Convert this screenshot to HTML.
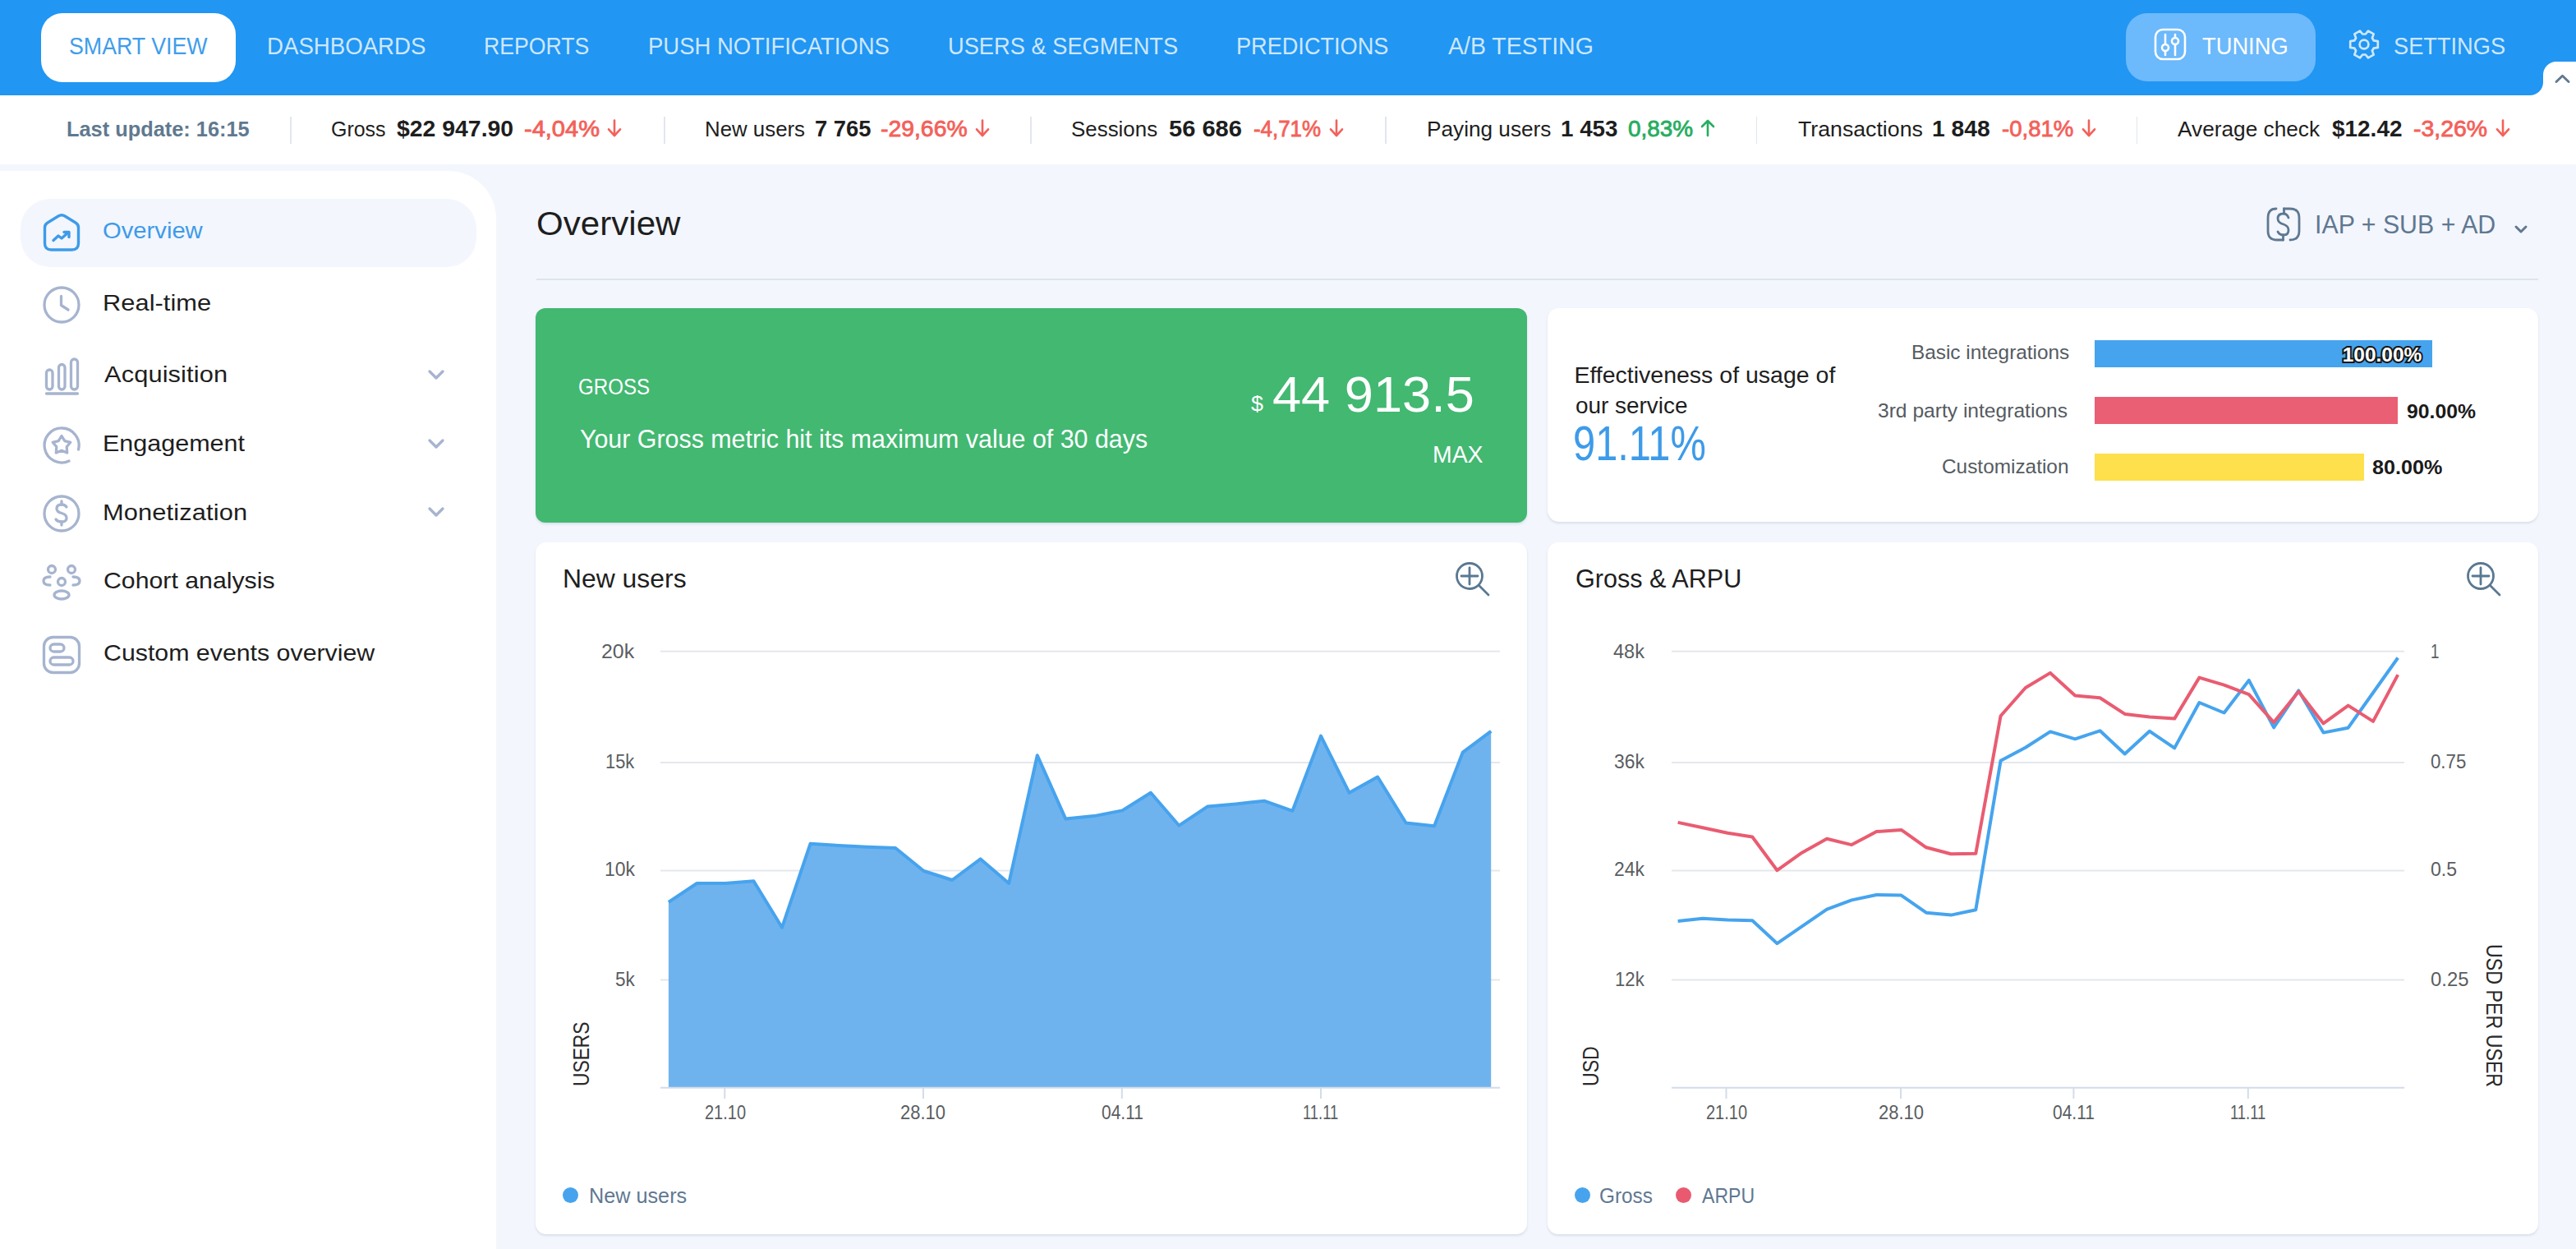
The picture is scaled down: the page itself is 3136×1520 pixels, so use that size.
<!DOCTYPE html>
<html><head><meta charset="utf-8"><style>
html,body{margin:0;padding:0;width:3136px;height:1520px;overflow:hidden;background:#f3f6fd;font-family:"Liberation Sans",sans-serif}
.r{position:absolute;display:block}
.t{position:absolute;white-space:nowrap;line-height:1}
</style></head><body>
<div class="r" style="left:0;top:0;width:3136px;height:116px;background:#2196f3"></div>
<div class="r" style="left:0;top:116px;width:3136px;height:84px;background:#fff"></div>
<div class="r" style="left:3080px;top:100px;width:20px;height:16px;background:#fff"></div>
<div class="r" style="left:3064px;top:84px;width:32px;height:32px;background:#2196f3;border-bottom-right-radius:16px"></div>
<div class="r" style="left:3096px;top:75px;width:40px;height:50px;background:#fff;border-top-left-radius:16px"></div>
<svg class="r" style="left:3100px;top:80px" width="36" height="30" viewBox="0 0 36 30"><path d="M12 19.5 L19.5 12.3 L27 19.5" fill="none" stroke="#5f7891" stroke-width="2.9" stroke-linecap="round" stroke-linejoin="round"/></svg>
<div class="r" style="left:50px;top:16px;width:237px;height:84px;background:#fff;border-radius:26px"></div>
<div class="r" style="left:2588px;top:16px;width:231px;height:83px;background:#6cb9fb;border-radius:26px"></div>
<div class="t" style="left:84.4px;top:41.9px;font-size:29px;letter-spacing:0.00px;color:#3f9deb;transform:scaleX(0.9232);transform-origin:0 0;">SMART VIEW</div>
<div class="t" style="left:325.1px;top:41.9px;font-size:29px;letter-spacing:0.00px;color:#cfe7fc;transform:scaleX(0.9527);transform-origin:0 0;">DASHBOARDS</div>
<div class="t" style="left:589.4px;top:41.9px;font-size:29px;letter-spacing:0.00px;color:#cfe7fc;transform:scaleX(0.9189);transform-origin:0 0;">REPORTS</div>
<div class="t" style="left:788.9px;top:41.9px;font-size:29px;letter-spacing:0.00px;color:#cfe7fc;transform:scaleX(0.9464);transform-origin:0 0;">PUSH NOTIFICATIONS</div>
<div class="t" style="left:1154.4px;top:41.9px;font-size:29px;letter-spacing:0.00px;color:#cfe7fc;transform:scaleX(0.9399);transform-origin:0 0;">USERS &amp; SEGMENTS</div>
<div class="t" style="left:1504.9px;top:41.9px;font-size:29px;letter-spacing:0.00px;color:#cfe7fc;transform:scaleX(0.9354);transform-origin:0 0;">PREDICTIONS</div>
<div class="t" style="left:1762.8px;top:41.9px;font-size:29px;letter-spacing:0.00px;color:#cfe7fc;transform:scaleX(0.9828);transform-origin:0 0;">A/B TESTING</div>
<div class="t" style="left:2680.7px;top:41.9px;font-size:29px;letter-spacing:0.00px;color:#ffffff;transform:scaleX(0.9416);transform-origin:0 0;">TUNING</div>
<div class="t" style="left:2914.3px;top:41.9px;font-size:29px;letter-spacing:0.00px;color:#cfe7fc;transform:scaleX(0.9382);transform-origin:0 0;">SETTINGS</div>
<svg class="r" style="left:2622px;top:34px" width="40" height="40" viewBox="0 0 40 40" fill="none" stroke="#fff" stroke-width="2.6" stroke-linecap="round">
<rect x="2" y="2" width="36" height="36" rx="9"/>
<line x1="14" y1="8" x2="14" y2="20"/><circle cx="14" cy="24" r="4"/><line x1="14" y1="28" x2="14" y2="33"/>
<line x1="26" y1="8" x2="26" y2="12"/><circle cx="26" cy="16" r="4"/><line x1="26" y1="20" x2="26" y2="33"/>
</svg>
<svg class="r" style="left:2856.5px;top:33.8px" width="42" height="40" viewBox="0 0 42 40" fill="none" stroke="#cfe7fc" stroke-width="2.7" stroke-linejoin="round">
<path d="M32.7 15.3 L37.8 16.1 L37.8 23.9 L32.7 24.7 L30.9 27.8 L32.7 32.6 L26.0 36.4 L22.8 32.5 L19.2 32.5 L16.0 36.4 L9.3 32.6 L11.1 27.8 L9.3 24.7 L4.2 23.9 L4.2 16.1 L9.3 15.3 L11.1 12.2 L9.3 7.4 L16.0 3.6 L19.2 7.5 L22.8 7.5 L26.0 3.6 L32.7 7.4 L30.9 12.2 Z"/>
<circle cx="21" cy="20" r="5.4"/></svg>
<div class="t" style="left:81.2px;top:144.3px;font-size:26.4px;letter-spacing:0.00px;color:#60798f;font-weight:700;transform:scaleX(0.9612);transform-origin:0 0;">Last update: 16:15</div>
<div class="r" style="left:353.25px;top:141.5px;width:1.5px;height:33.5px;background:#e1e6ef"></div>
<div class="r" style="left:808.05px;top:141.5px;width:1.5px;height:33.5px;background:#e1e6ef"></div>
<div class="r" style="left:1254.25px;top:141.5px;width:1.5px;height:33.5px;background:#e1e6ef"></div>
<div class="r" style="left:1686.05px;top:141.5px;width:1.5px;height:33.5px;background:#e1e6ef"></div>
<div class="r" style="left:2137.95px;top:141.5px;width:1.5px;height:33.5px;background:#e1e6ef"></div>
<div class="r" style="left:2600.95px;top:141.5px;width:1.5px;height:33.5px;background:#e1e6ef"></div>
<div class="t" style="left:402.9px;top:144.3px;font-size:26.4px;letter-spacing:0.00px;color:#1e1e1e;transform:scaleX(0.9461);transform-origin:0 0;">Gross</div>
<div class="t" style="left:482.9px;top:143.8px;font-size:27px;letter-spacing:0.00px;color:#1e1e1e;font-weight:700;transform:scaleX(1.0516);transform-origin:0 0;">$22 947.90</div>
<div class="t" style="left:638.0px;top:143.8px;font-size:27px;letter-spacing:0.00px;color:#f3615a;transform:scaleX(1.0749);transform-origin:0 0;-webkit-text-stroke:0.8px #f3615a">-4,04%</div>
<svg class="r" style="left:738.4px;top:140px" width="20" height="28" viewBox="0 0 20 28"><path d="M10 6.6 V25 M3 17.3 L10 25.2 L17 17.3" fill="none" stroke="#f3615a" stroke-width="2.6" stroke-linecap="round" stroke-linejoin="round"/></svg>
<div class="t" style="left:858.3px;top:144.3px;font-size:26.4px;letter-spacing:0.00px;color:#1e1e1e;transform:scaleX(0.9790);transform-origin:0 0;">New users</div>
<div class="t" style="left:991.5px;top:143.8px;font-size:27px;letter-spacing:0.00px;color:#1e1e1e;font-weight:700;transform:scaleX(1.0129);transform-origin:0 0;">7 765</div>
<div class="t" style="left:1071.8px;top:143.8px;font-size:27px;letter-spacing:0.00px;color:#f3615a;transform:scaleX(1.0504);transform-origin:0 0;-webkit-text-stroke:0.8px #f3615a">-29,66%</div>
<svg class="r" style="left:1186px;top:140px" width="20" height="28" viewBox="0 0 20 28"><path d="M10 6.6 V25 M3 17.3 L10 25.2 L17 17.3" fill="none" stroke="#f3615a" stroke-width="2.6" stroke-linecap="round" stroke-linejoin="round"/></svg>
<div class="t" style="left:1304.2px;top:144.3px;font-size:26.4px;letter-spacing:0.00px;color:#1e1e1e;transform:scaleX(0.9814);transform-origin:0 0;">Sessions</div>
<div class="t" style="left:1423.0px;top:143.8px;font-size:27px;letter-spacing:0.00px;color:#1e1e1e;font-weight:700;transform:scaleX(1.0772);transform-origin:0 0;">56 686</div>
<div class="t" style="left:1526.0px;top:143.8px;font-size:27px;letter-spacing:0.00px;color:#f3615a;transform:scaleX(0.9591);transform-origin:0 0;-webkit-text-stroke:0.8px #f3615a">-4,71%</div>
<svg class="r" style="left:1616.6px;top:140px" width="20" height="28" viewBox="0 0 20 28"><path d="M10 6.6 V25 M3 17.3 L10 25.2 L17 17.3" fill="none" stroke="#f3615a" stroke-width="2.6" stroke-linecap="round" stroke-linejoin="round"/></svg>
<div class="t" style="left:1737.4px;top:144.3px;font-size:26.4px;letter-spacing:0.00px;color:#1e1e1e;transform:scaleX(0.9926);transform-origin:0 0;">Paying users</div>
<div class="t" style="left:1899.5px;top:143.8px;font-size:27px;letter-spacing:0.00px;color:#1e1e1e;font-weight:700;transform:scaleX(1.0280);transform-origin:0 0;">1 453</div>
<div class="t" style="left:1982.0px;top:143.8px;font-size:27px;letter-spacing:-0.00px;color:#27ad5f;transform:scaleX(1.0327);transform-origin:0 0;-webkit-text-stroke:0.8px #27ad5f">0,83%</div>
<svg class="r" style="left:2069.3px;top:140px" width="20" height="28" viewBox="0 0 20 28"><path d="M10 25 V7.2 M3 14 L10 7 L17 14" fill="none" stroke="#27ad5f" stroke-width="2.6" stroke-linecap="round" stroke-linejoin="round"/></svg>
<div class="t" style="left:2189.0px;top:144.3px;font-size:26.4px;letter-spacing:0.00px;color:#1e1e1e;transform:scaleX(1.0117);transform-origin:0 0;">Transactions</div>
<div class="t" style="left:2352.2px;top:143.8px;font-size:27px;letter-spacing:0.00px;color:#1e1e1e;font-weight:700;transform:scaleX(1.0470);transform-origin:0 0;">1 848</div>
<div class="t" style="left:2436.7px;top:143.8px;font-size:27px;letter-spacing:0.00px;color:#f3615a;transform:scaleX(1.0211);transform-origin:0 0;-webkit-text-stroke:0.8px #f3615a">-0,81%</div>
<svg class="r" style="left:2532.6px;top:140px" width="20" height="28" viewBox="0 0 20 28"><path d="M10 6.6 V25 M3 17.3 L10 25.2 L17 17.3" fill="none" stroke="#f3615a" stroke-width="2.6" stroke-linecap="round" stroke-linejoin="round"/></svg>
<div class="t" style="left:2651.0px;top:144.3px;font-size:26.4px;letter-spacing:0.00px;color:#1e1e1e;transform:scaleX(0.9943);transform-origin:0 0;">Average check</div>
<div class="t" style="left:2838.5px;top:143.8px;font-size:27px;letter-spacing:0.00px;color:#1e1e1e;font-weight:700;transform:scaleX(1.0348);transform-origin:0 0;">$12.42</div>
<div class="t" style="left:2938.0px;top:143.8px;font-size:27px;letter-spacing:0.00px;color:#f3615a;transform:scaleX(1.0526);transform-origin:0 0;-webkit-text-stroke:0.8px #f3615a">-3,26%</div>
<svg class="r" style="left:3036.6px;top:140px" width="20" height="28" viewBox="0 0 20 28"><path d="M10 6.6 V25 M3 17.3 L10 25.2 L17 17.3" fill="none" stroke="#f3615a" stroke-width="2.6" stroke-linecap="round" stroke-linejoin="round"/></svg>
<div class="r" style="left:0;top:208px;width:604px;height:1400px;background:#fff;border-top-right-radius:58px"></div>
<div class="r" style="left:25px;top:242px;width:554.5px;height:83px;background:#f3f6fd;border-radius:36px"></div>
<div class="t" style="left:125.3px;top:267.4px;font-size:28px;letter-spacing:0.00px;color:#3d9be9;transform:scaleX(1.0430);transform-origin:0 0;">Overview</div>
<div class="t" style="left:125.3px;top:355.2px;font-size:28px;letter-spacing:0.04px;color:#1e1e1e;transform:scaleX(1.1000);transform-origin:0 0;">Real-time</div>
<div class="t" style="left:126.5px;top:442.2px;font-size:28px;letter-spacing:0.10px;color:#1e1e1e;transform:scaleX(1.1000);transform-origin:0 0;">Acquisition</div>
<div class="t" style="left:124.9px;top:526.2px;font-size:28px;letter-spacing:0.00px;color:#1e1e1e;transform:scaleX(1.0893);transform-origin:0 0;">Engagement</div>
<div class="t" style="left:124.9px;top:609.8px;font-size:28px;letter-spacing:0.13px;color:#1e1e1e;transform:scaleX(1.1000);transform-origin:0 0;">Monetization</div>
<div class="t" style="left:125.8px;top:693.2px;font-size:28px;letter-spacing:-0.00px;color:#1e1e1e;transform:scaleX(1.0808);transform-origin:0 0;">Cohort analysis</div>
<div class="t" style="left:125.8px;top:781.2px;font-size:28px;letter-spacing:0.00px;color:#1e1e1e;transform:scaleX(1.0827);transform-origin:0 0;">Custom events overview</div>
<svg class="r" style="left:520px;top:448.3px" width="22" height="16" viewBox="0 0 22 16"><path d="M3 4 L11 12 L19 4" fill="none" stroke="#a6b4cf" stroke-width="3.3" stroke-linecap="round" stroke-linejoin="round"/></svg>
<svg class="r" style="left:520px;top:531.5px" width="22" height="16" viewBox="0 0 22 16"><path d="M3 4 L11 12 L19 4" fill="none" stroke="#a6b4cf" stroke-width="3.3" stroke-linecap="round" stroke-linejoin="round"/></svg>
<svg class="r" style="left:520px;top:615px" width="22" height="16" viewBox="0 0 22 16"><path d="M3 4 L11 12 L19 4" fill="none" stroke="#a6b4cf" stroke-width="3.3" stroke-linecap="round" stroke-linejoin="round"/></svg>
<svg class="r" style="left:50px;top:258px" width="50" height="50" viewBox="0 0 50 50" fill="none" stroke="#3d9be9" stroke-width="3.4" stroke-linecap="round" stroke-linejoin="round">
<path d="M4.5 19 Q4.5 15 8 13 L21 5 Q25 2.5 29 5 L42 13 Q45.5 15 45.5 19 V38 Q45.5 46 37.5 46 H12.5 Q4.5 46 4.5 38 Z"/>
<path d="M15 34.5 L21 29 L25 32 L33 25"/><path d="M28 24.5 H34 V30.5" /></svg>
<svg class="r" style="left:50px;top:346px" width="50" height="50" viewBox="0 0 50 50" fill="none" stroke="#a6b4cf" stroke-width="3.3" stroke-linecap="round" stroke-linejoin="round">
<circle cx="25" cy="25" r="21"/><path d="M24.5 14.5 V25.5 L33 31"/></svg>
<svg class="r" style="left:50px;top:432px" width="50" height="52" viewBox="0 0 50 52" fill="none" stroke="#a6b4cf" stroke-width="3.3" stroke-linecap="round" stroke-linejoin="round">
<rect x="6.5" y="18" width="7.5" height="24" rx="3.7"/><rect x="21.5" y="11.5" width="7.5" height="30.5" rx="3.7"/><rect x="36.5" y="5" width="8" height="37" rx="4"/>
<line x1="6.5" y1="47" x2="44.5" y2="47"/></svg>
<svg class="r" style="left:50px;top:517px" width="50" height="50" viewBox="0 0 50 50" fill="none" stroke="#a6b4cf" stroke-width="3.3" stroke-linecap="round" stroke-linejoin="round">
<path d="M45.5 30 A21 21 0 1 0 34 44"/>
<path d="M25 13.5 L28.8 19.6 L35.8 21.3 L31.2 26.8 L31.7 34 L25 31.2 L18.3 34 L18.8 26.8 L14.2 21.3 L21.2 19.6 Z"/></svg>
<svg class="r" style="left:50px;top:600px" width="50" height="50" viewBox="0 0 50 50" fill="none" stroke="#a6b4cf" stroke-width="3.3" stroke-linecap="round" stroke-linejoin="round">
<circle cx="25" cy="25" r="21"/><path d="M31 17 Q29 14 25 14 Q19 14 19 19 Q19 23 25 24.5 Q31 26 31 30.5 Q31 35 25 35 Q20 35 18 32"/><line x1="25" y1="10" x2="25" y2="14"/><line x1="25" y1="35" x2="25" y2="39"/></svg>
<svg class="r" style="left:50px;top:686px" width="50" height="50" viewBox="0 0 50 50" fill="none" stroke="#a6b4cf" stroke-width="3.3" stroke-linecap="round" stroke-linejoin="round">
<circle cx="13" cy="7" r="4.5"/><circle cx="37" cy="7" r="4.5"/><circle cx="25" cy="22" r="4.5"/>
<path d="M11 16 Q3 16 3 21 Q3 26 11 26"/><path d="M39 16 Q47 16 47 21 Q47 26 39 26"/><ellipse cx="25" cy="38" rx="9" ry="5"/></svg>
<svg class="r" style="left:50px;top:772px" width="50" height="50" viewBox="0 0 50 50" fill="none" stroke="#a6b4cf" stroke-width="3.3" stroke-linecap="round" stroke-linejoin="round">
<rect x="3.5" y="3.5" width="43" height="43" rx="11"/><rect x="11" y="12" width="17" height="9" rx="4.5"/><rect x="11" y="28" width="28" height="9" rx="4.5"/></svg>
<div class="t" style="left:653.1px;top:252.2px;font-size:41px;letter-spacing:0.00px;color:#1e1e1e;transform:scaleX(1.0268);transform-origin:0 0;">Overview</div>
<div class="r" style="left:653px;top:339px;width:2437px;height:2px;background:#dfe3ea"></div>
<div class="t" style="left:2817.9px;top:257.8px;font-size:30.6px;letter-spacing:0.00px;color:#5f7891;transform:scaleX(0.9912);transform-origin:0 0;">IAP + SUB + AD</div>
<svg class="r" style="left:2756px;top:249px" width="48" height="48" viewBox="0 0 48 48" fill="none" stroke="#5f7891" stroke-width="2.8" stroke-linecap="round" stroke-linejoin="round">
<path d="M23.5 43 H16 Q5 43 5 32 V16 Q5 5 15 5 H14.5"/><path d="M24.5 5 H32 Q43 5 43 16 V32 Q43 43 32 43 H32.5"/>
<path d="M30 16 Q28 11 24 11 Q17 11 17 17 Q17 22 24 24 Q30 26 30 31 Q30 37 24 37 Q19 37 17 33"/><line x1="24.5" y1="5" x2="24.5" y2="11"/><line x1="23.5" y1="37" x2="23.5" y2="43"/></svg>
<svg class="r" style="left:3058px;top:268px" width="22" height="20" viewBox="0 0 22 20"><path d="M5 8 L11 14 L17 8" fill="none" stroke="#5f7891" stroke-width="3" stroke-linecap="round" stroke-linejoin="round"/></svg>
<div class="r" style="left:652px;top:375px;width:1206.5px;height:260.5px;background:#42b871;border-radius:12px;box-shadow:0 2px 3px rgba(50,70,110,0.13)"></div>
<div class="r" style="left:1884px;top:375px;width:1205.5px;height:259.5px;background:#fff;border-radius:14px;box-shadow:0 2px 3px rgba(50,70,110,0.13)"></div>
<div class="r" style="left:652px;top:660px;width:1206.5px;height:842px;background:#fff;border-radius:13px;box-shadow:0 2px 3px rgba(50,70,110,0.13)"></div>
<div class="r" style="left:1884px;top:660px;width:1206px;height:842px;background:#fff;border-radius:13px;box-shadow:0 2px 3px rgba(50,70,110,0.13)"></div>
<div class="t" style="left:704.3px;top:457.8px;font-size:27px;letter-spacing:0.00px;color:#fff;transform:scaleX(0.8933);transform-origin:0 0;">GROSS</div>
<div class="t" style="left:705.5px;top:519.4px;font-size:30.5px;letter-spacing:0.00px;color:#fff;transform:scaleX(0.9960);transform-origin:0 0;">Your Gross metric hit its maximum value of 30 days</div>
<div class="t" style="left:1522.9px;top:478.8px;font-size:25px;letter-spacing:0.00px;color:#fff;transform:scaleX(1.0739);transform-origin:0 0;">$</div>
<div class="t" style="left:1549.2px;top:448.9px;font-size:62px;letter-spacing:0.00px;color:#fff;transform:scaleX(1.0186);transform-origin:0 0;">44 913.5</div>
<div class="t" style="left:1743.5px;top:537.6px;font-size:29.5px;letter-spacing:0.00px;color:#fff;transform:scaleX(0.9628);transform-origin:0 0;">MAX</div>
<div class="t" style="left:1916.4px;top:442.0px;font-size:28.5px;letter-spacing:0.00px;color:#1e1e1e;">Effectiveness of usage of</div>
<div class="t" style="left:1918.0px;top:478.6px;font-size:28.5px;letter-spacing:0.00px;color:#1e1e1e;transform:scaleX(0.9794);transform-origin:0 0;">our service</div>
<div class="t" style="left:1914.7px;top:511.1px;font-size:59px;letter-spacing:0.00px;color:#3d9be9;transform:scaleX(0.8267);transform-origin:0 0;">91.11%</div>
<div class="t" style="left:2326.5px;top:417.2px;font-size:24.5px;letter-spacing:0.00px;color:#555b61;transform:scaleX(0.9940);transform-origin:0 0;">Basic integrations</div>
<div class="t" style="left:2286.0px;top:487.8px;font-size:24.5px;letter-spacing:0.00px;color:#555b61;transform:scaleX(1.0038);transform-origin:0 0;">3rd party integrations</div>
<div class="t" style="left:2364.2px;top:556.2px;font-size:24.5px;letter-spacing:0.00px;color:#555b61;transform:scaleX(0.9952);transform-origin:0 0;">Customization</div>
<div class="r" style="left:2550px;top:414px;width:411px;height:33px;background:#46a4ee"></div>
<div class="r" style="left:2550px;top:483px;width:369px;height:33px;background:#ea5f74"></div>
<div class="r" style="left:2550px;top:552px;width:328px;height:33px;background:#fde04c"></div>
<div class="t" style="left:2851.7px;top:420.1px;font-size:24.5px;letter-spacing:0.00px;color:#fff;font-weight:700;-webkit-text-stroke:4px #161616;paint-order:stroke fill">100.00%</div>
<div class="t" style="left:2929.7px;top:488.7px;font-size:24.5px;letter-spacing:0.00px;color:#1a1a1a;font-weight:700;transform:scaleX(1.0093);transform-origin:0 0;">90.00%</div>
<div class="t" style="left:2888.3px;top:557.2px;font-size:24.5px;letter-spacing:-0.00px;color:#1a1a1a;font-weight:700;transform:scaleX(1.0262);transform-origin:0 0;">80.00%</div>
<div class="t" style="left:684.9px;top:687.6px;font-size:32px;letter-spacing:0.00px;color:#1e1e1e;transform:scaleX(0.9961);transform-origin:0 0;">New users</div>
<div class="t" style="left:1918.3px;top:687.6px;font-size:32px;letter-spacing:0.00px;color:#1e1e1e;transform:scaleX(0.9559);transform-origin:0 0;">Gross &amp; ARPU</div>
<svg class="r" style="left:1768.5px;top:680.5px" width="50" height="50" viewBox="0 0 50 50" fill="none" stroke="#5a7891" stroke-width="2.8" stroke-linecap="round">
<circle cx="20" cy="20" r="15.5"/><line x1="10" y1="20" x2="30" y2="20"/><line x1="20" y1="10" x2="20" y2="30"/><line x1="31.5" y1="31.5" x2="43" y2="43"/></svg>
<svg class="r" style="left:3000px;top:680.5px" width="50" height="50" viewBox="0 0 50 50" fill="none" stroke="#5a7891" stroke-width="2.8" stroke-linecap="round">
<circle cx="20" cy="20" r="15.5"/><line x1="10" y1="20" x2="30" y2="20"/><line x1="20" y1="10" x2="20" y2="30"/><line x1="31.5" y1="31.5" x2="43" y2="43"/></svg>
<svg class="r" style="left:0;top:0" width="3136" height="1520" viewBox="0 0 3136 1520">
<line x1="804" y1="792.8" x2="1826" y2="792.8" stroke="#e4e7ec" stroke-width="2"/>
<line x1="2035" y1="792.8" x2="2927" y2="792.8" stroke="#e4e7ec" stroke-width="2"/>
<line x1="804" y1="927.9" x2="1826" y2="927.9" stroke="#e4e7ec" stroke-width="2"/>
<line x1="2035" y1="927.9" x2="2927" y2="927.9" stroke="#e4e7ec" stroke-width="2"/>
<line x1="804" y1="1059.6" x2="1826" y2="1059.6" stroke="#e4e7ec" stroke-width="2"/>
<line x1="2035" y1="1059.6" x2="2927" y2="1059.6" stroke="#e4e7ec" stroke-width="2"/>
<line x1="804" y1="1192.4" x2="1826" y2="1192.4" stroke="#e4e7ec" stroke-width="2"/>
<line x1="2035" y1="1192.4" x2="2927" y2="1192.4" stroke="#e4e7ec" stroke-width="2"/>
<polygon points="813.9,1323.7 813.9,1097.9 848.4,1075.0 883.0,1075.0 917.5,1072.3 952.0,1128.8 986.5,1026.8 1021.1,1029.0 1055.6,1030.8 1090.1,1032.0 1124.6,1060.0 1159.2,1071.0 1193.7,1045.4 1228.2,1075.0 1262.8,919.2 1297.3,996.6 1331.8,993.1 1366.3,986.4 1400.9,964.8 1435.4,1004.7 1469.9,981.6 1504.5,978.4 1539.0,974.7 1573.5,986.8 1608.0,895.6 1642.6,964.8 1677.1,945.5 1711.6,1001.5 1746.1,1005.3 1780.7,915.6 1815.2,889.8 1815.2,1323.7" fill="#6fb3ee"/>
<polyline points="813.9,1097.9 848.4,1075.0 883.0,1075.0 917.5,1072.3 952.0,1128.8 986.5,1026.8 1021.1,1029.0 1055.6,1030.8 1090.1,1032.0 1124.6,1060.0 1159.2,1071.0 1193.7,1045.4 1228.2,1075.0 1262.8,919.2 1297.3,996.6 1331.8,993.1 1366.3,986.4 1400.9,964.8 1435.4,1004.7 1469.9,981.6 1504.5,978.4 1539.0,974.7 1573.5,986.8 1608.0,895.6 1642.6,964.8 1677.1,945.5 1711.6,1001.5 1746.1,1005.3 1780.7,915.6 1815.2,889.8" fill="none" stroke="#47a3ed" stroke-width="4" stroke-linejoin="round"/>
<line x1="804" y1="1323.7" x2="1826" y2="1323.7" stroke="#d3dcea" stroke-width="2"/>
<line x1="2035" y1="1323.7" x2="2927" y2="1323.7" stroke="#d3dcea" stroke-width="2"/>
<line x1="882.3" y1="1323" x2="882.3" y2="1337" stroke="#d3dcea" stroke-width="2"/>
<line x1="1124" y1="1323" x2="1124" y2="1337" stroke="#d3dcea" stroke-width="2"/>
<line x1="1365.8" y1="1323" x2="1365.8" y2="1337" stroke="#d3dcea" stroke-width="2"/>
<line x1="1608" y1="1323" x2="1608" y2="1337" stroke="#d3dcea" stroke-width="2"/>
<line x1="2101.5" y1="1323" x2="2101.5" y2="1337" stroke="#d3dcea" stroke-width="2"/>
<line x1="2314" y1="1323" x2="2314" y2="1337" stroke="#d3dcea" stroke-width="2"/>
<line x1="2524.4" y1="1323" x2="2524.4" y2="1337" stroke="#d3dcea" stroke-width="2"/>
<line x1="2736.8" y1="1323" x2="2736.8" y2="1337" stroke="#d3dcea" stroke-width="2"/>
<polyline points="2042.6,1121.0 2072.8,1117.8 2103.1,1119.4 2133.3,1120.3 2163.5,1148.2 2193.7,1127.4 2224.0,1106.6 2254.2,1095.4 2284.4,1089.0 2314.6,1089.6 2344.9,1110.7 2375.1,1113.6 2405.3,1107.2 2435.6,925.7 2465.8,909.7 2496.0,890.4 2526.2,899.3 2556.5,889.3 2586.7,917.5 2616.9,889.8 2647.2,910.4 2677.4,855.0 2707.6,867.5 2737.8,827.9 2768.1,885.4 2798.3,840.4 2828.5,891.6 2858.7,885.7 2889.0,843.0 2919.2,800.5" fill="none" stroke="#46a4ee" stroke-width="4" stroke-linejoin="round"/>
<polyline points="2042.6,1000.9 2072.8,1007.3 2103.1,1013.7 2133.3,1018.5 2163.5,1059.2 2193.7,1037.7 2224.0,1020.8 2254.2,1028.1 2284.4,1012.1 2314.6,1009.9 2344.9,1031.3 2375.1,1039.3 2405.3,1038.7 2435.6,871.2 2465.8,837.0 2496.0,818.9 2526.2,846.4 2556.5,849.3 2586.7,868.9 2616.9,872.5 2647.2,874.6 2677.4,824.6 2707.6,833.6 2737.8,845.2 2768.1,879.1 2798.3,841.6 2828.5,880.4 2858.7,858.6 2889.0,877.9 2919.2,821.1" fill="none" stroke="#e95c71" stroke-width="4" stroke-linejoin="round"/>
</svg>
<div class="t" style="left:732.4px;top:782.2px;font-size:23.5px;letter-spacing:0.00px;color:#5a5d61;transform:scaleX(1.0584);transform-origin:0 0;">20k</div>
<div class="t" style="left:737.3px;top:915.8px;font-size:23.5px;letter-spacing:0.00px;color:#5a5d61;transform:scaleX(0.9289);transform-origin:0 0;">15k</div>
<div class="t" style="left:735.5px;top:1047.0px;font-size:23.5px;letter-spacing:0.00px;color:#5a5d61;transform:scaleX(0.9768);transform-origin:0 0;">10k</div>
<div class="t" style="left:748.6px;top:1180.7px;font-size:23.5px;letter-spacing:0.00px;color:#5a5d61;transform:scaleX(0.9600);transform-origin:0 0;">5k</div>
<div class="t" style="left:1964.0px;top:782.2px;font-size:23.5px;letter-spacing:0.00px;color:#5a5d61;">48k</div>
<div class="t" style="left:1965.0px;top:915.8px;font-size:23.5px;letter-spacing:0.00px;color:#5a5d61;transform:scaleX(0.9737);transform-origin:0 0;">36k</div>
<div class="t" style="left:1965.0px;top:1047.0px;font-size:23.5px;letter-spacing:0.00px;color:#5a5d61;transform:scaleX(0.9737);transform-origin:0 0;">24k</div>
<div class="t" style="left:1966.2px;top:1180.7px;font-size:23.5px;letter-spacing:0.00px;color:#5a5d61;transform:scaleX(0.9421);transform-origin:0 0;">12k</div>
<div class="t" style="left:2959.4px;top:782.2px;font-size:23.5px;letter-spacing:0.00px;color:#5a5d61;transform:scaleX(0.8000);transform-origin:0 0;">1</div>
<div class="t" style="left:2959.4px;top:915.8px;font-size:23.5px;letter-spacing:0.00px;color:#5a5d61;transform:scaleX(0.9464);transform-origin:0 0;">0.75</div>
<div class="t" style="left:2959.4px;top:1047.0px;font-size:23.5px;letter-spacing:0.00px;color:#5a5d61;transform:scaleX(0.9808);transform-origin:0 0;">0.5</div>
<div class="t" style="left:2959.4px;top:1180.7px;font-size:23.5px;letter-spacing:0.00px;color:#5a5d61;transform:scaleX(1.0142);transform-origin:0 0;">0.25</div>
<div class="t" style="left:857.5px;top:1342.8px;font-size:23.5px;letter-spacing:0.00px;color:#5a5d61;transform:scaleX(0.8511);transform-origin:0 0;">21.10</div>
<div class="t" style="left:1096.4px;top:1342.8px;font-size:23.5px;letter-spacing:0.00px;color:#5a5d61;transform:scaleX(0.9362);transform-origin:0 0;">28.10</div>
<div class="t" style="left:1340.5px;top:1342.8px;font-size:23.5px;letter-spacing:0.00px;color:#5a5d61;transform:scaleX(0.8928);transform-origin:0 0;">04.11</div>
<div class="t" style="left:1585.6px;top:1342.8px;font-size:23.5px;letter-spacing:0.00px;color:#5a5d61;transform:scaleX(0.7834);transform-origin:0 0;">11.11</div>
<div class="t" style="left:2076.5px;top:1342.8px;font-size:23.5px;letter-spacing:0.00px;color:#5a5d61;transform:scaleX(0.8511);transform-origin:0 0;">21.10</div>
<div class="t" style="left:2286.5px;top:1342.8px;font-size:23.5px;letter-spacing:0.00px;color:#5a5d61;transform:scaleX(0.9362);transform-origin:0 0;">28.10</div>
<div class="t" style="left:2498.9px;top:1342.8px;font-size:23.5px;letter-spacing:0.00px;color:#5a5d61;transform:scaleX(0.8928);transform-origin:0 0;">04.11</div>
<div class="t" style="left:2714.6px;top:1342.8px;font-size:23.5px;letter-spacing:0.00px;color:#5a5d61;transform:scaleX(0.7834);transform-origin:0 0;">11.11</div>
<div class="t" style="left:693.7px;top:1322.0px;font-size:27.6px;letter-spacing:0.00px;color:#2a2a2a;transform-origin:0 0;transform:rotate(-90deg) scaleX(0.8253)">USERS</div>
<div class="t" style="left:1923.1px;top:1322.0px;font-size:27.6px;letter-spacing:0.00px;color:#2a2a2a;transform-origin:0 0;transform:rotate(-90deg) scaleX(0.8362)">USD</div>
<div class="t" style="left:3050.4px;top:1149.0px;font-size:27.6px;letter-spacing:0.00px;color:#2a2a2a;transform-origin:0 0;transform:rotate(90deg) scaleX(0.8412)">USD PER USER</div>
<div class="r" style="left:685.3px;top:1444.5px;width:19px;height:19px;border-radius:50%;background:#47a3ed"></div>
<div class="t" style="left:717.2px;top:1443.0px;font-size:25px;letter-spacing:-0.00px;color:#5f7891;transform:scaleX(1.0091);transform-origin:0 0;">New users</div>
<div class="r" style="left:1916.5px;top:1444.5px;width:19px;height:19px;border-radius:50%;background:#47a3ed"></div>
<div class="t" style="left:1947.2px;top:1443.0px;font-size:25px;letter-spacing:0.00px;color:#5f7891;transform:scaleX(0.9726);transform-origin:0 0;">Gross</div>
<div class="r" style="left:2039.8px;top:1444.5px;width:19px;height:19px;border-radius:50%;background:#e95a70"></div>
<div class="t" style="left:2071.6px;top:1443.0px;font-size:25px;letter-spacing:0.00px;color:#5f7891;transform:scaleX(0.9223);transform-origin:0 0;">ARPU</div>
</body></html>
